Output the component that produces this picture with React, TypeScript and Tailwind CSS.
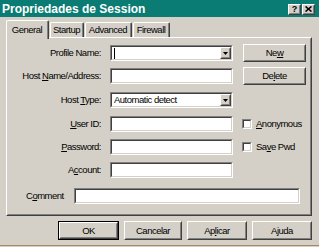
import { FC, ReactNode } from 'react'

const Raised: FC<{ className?: string; children?: ReactNode }> = ({ className = '', children }) => (
  <div className={`border border-t-white border-l-white border-r-[#404040] border-b-[#404040] bg-[#d4d0c8] ${className}`}>
    <div className="w-full h-full border border-t-[#d4d0c8] border-l-[#d4d0c8] border-r-[#808080] border-b-[#808080] flex items-center justify-center">
      {children}
    </div>
  </div>
)

const Sunken: FC<{ className?: string; children?: ReactNode }> = ({ className = '', children }) => (
  <div className={`border border-t-[#808080] border-l-[#808080] border-r-white border-b-white ${className}`}>
    <div className="w-full h-full bg-white border border-t-[#404040] border-l-[#404040] border-r-[#d4d0c8] border-b-[#d4d0c8] flex items-center">
      {children}
    </div>
  </div>
)

const Combo: FC<{ value?: string; caret?: boolean }> = ({ value, caret }) => (
  <Sunken className="w-[123px] h-[16px]">
    <div className="flex-1 flex items-center pl-[1px] h-full overflow-hidden whitespace-nowrap">
      {caret && <div className="w-[1px] h-[11px] bg-black ml-[1px]" />}
      {value && <span className="pl-[1px]">{value}</span>}
    </div>
    <Raised className="w-[11px] h-full">
      <svg width="5" height="3" viewBox="0 0 5 3">
        <path d="M0 0h5L2.5 3z" fill="#000" />
      </svg>
    </Raised>
  </Sunken>
)

const Label: FC<{ children: ReactNode }> = ({ children }) => (
  <div className="w-[93px] text-right whitespace-nowrap">{children}</div>
)

const Check: FC<{ children: ReactNode }> = ({ children }) => (
  <div className="flex items-center">
    <Sunken className="w-[10px] h-[10px]" />
    <span className="ml-[4px] whitespace-nowrap">{children}</span>
  </div>
)

const Tab: FC<{ label: string; width: string; active?: boolean }> = ({ label, width, active }) =>
  active ? (
    <div className={`relative z-10 h-[19px] -mb-[2px] ${width} bg-[#d4d0c8] rounded-t-[2px] border-t border-l border-r border-t-white border-l-white border-r-[#404040] flex`}>
      <div className="flex-1 border-r border-r-[#808080] flex items-start justify-center pt-[3px]">{label}</div>
    </div>
  ) : (
    <div className={`h-[15px] ${width} bg-[#d4d0c8] rounded-t-[2px] border-t border-l border-r border-t-white border-l-white border-r-[#404040] flex`}>
      <div className="flex-1 border-r border-r-[#808080] flex items-start justify-center pt-[1px]">{label}</div>
    </div>
  )

export default function App() {
  return (
    <div className="w-[319px] h-[247px] overflow-hidden bg-[#d4d0c8] flex flex-col text-[9.5px] leading-[12px] tracking-[-0.5px] text-black font-['Liberation_Sans',Arial,sans-serif]">
      {/* title bar */}
      <div className="h-[17px] bg-[#0a7c74] flex items-center justify-between pl-[2px] pr-[4px]">
        <span className="text-white font-bold text-[12px] tracking-normal">Propriedades de Session</span>
        <div className="flex gap-[1px] mt-[1px]">
          <Raised className="w-[13px] h-[11px]">
            <span className="font-bold text-[9px] leading-[9px] tracking-normal">?</span>
          </Raised>
          <Raised className="w-[13px] h-[11px]">
            <svg width="7" height="6" viewBox="0 0 7 6">
              <path d="M0.5 0.5L6.5 5.5M6.5 0.5L0.5 5.5" stroke="#000" strokeWidth="1.6" />
            </svg>
          </Raised>
        </div>
      </div>

      {/* tabs */}
      <div className="h-[20px] flex items-end pl-[6px] gap-[1px]">
        <Tab label="General" width="w-[43px]" active />
        <Tab label="Startup" width="w-[34px]" />
        <Tab label="Advanced" width="w-[47px]" />
        <Tab label="Firewall" width="w-[37px]" />
      </div>

      {/* panel */}
      <div className="ml-[6px] w-[306px] h-[179px] border border-t-white border-l-white border-r-[#404040] border-b-[#404040]">
        <div className="w-full h-full border border-t-[#d4d0c8] border-l-[#d4d0c8] border-r-[#808080] border-b-[#808080] flex flex-col">
          <div className="flex items-center h-[16px] mt-[6px]">
            <Label>Profile Name:</Label>
            <div className="ml-[9px]"><Combo caret /></div>
            <Raised className="ml-[10px] w-[63px] h-[18px]">
              <span>Ne<span className="underline">w</span></span>
            </Raised>
          </div>
          <div className="flex items-center h-[16px] mt-[7px]">
            <Label>Host <span className="underline">N</span>ame/Address:</Label>
            <Sunken className="ml-[9px] w-[123px] h-[16px]" />
            <Raised className="ml-[10px] w-[63px] h-[18px]">
              <span>De<span className="underline">l</span>ete</span>
            </Raised>
          </div>
          <div className="flex items-center h-[16px] mt-[8px]">
            <Label>Host <span className="underline">T</span>ype:</Label>
            <div className="ml-[9px]"><Combo value="Automatic detect" /></div>
          </div>
          <div className="flex items-center h-[16px] mt-[8px]">
            <Label><span className="underline">U</span>ser ID:</Label>
            <Sunken className="ml-[9px] w-[123px] h-[16px]" />
            <div className="ml-[9px]">
              <Check><span className="underline">A</span>nonymous</Check>
            </div>
          </div>
          <div className="flex items-center h-[16px] mt-[7px]">
            <Label><span className="underline">P</span>assword:</Label>
            <Sunken className="ml-[9px] w-[123px] h-[16px]" />
            <div className="ml-[9px]">
              <Check>Sa<span className="underline">v</span>e Pwd</Check>
            </div>
          </div>
          <div className="flex items-center h-[16px] mt-[7px]">
            <Label>A<span className="underline">c</span>count:</Label>
            <Sunken className="ml-[9px] w-[123px] h-[16px]" />
          </div>
          <div className="flex items-center h-[16px] mt-[10px] pl-[18px]">
            <span>C<span className="underline">o</span>mment</span>
            <Sunken className="ml-[10px] w-[226px] h-[16px]" />
          </div>
        </div>
      </div>

      {/* bottom buttons */}
      <div className="mt-[5px] flex justify-end gap-[5px] pr-[7px]">
        <div className="border border-black w-[61px] h-[19px]">
          <Raised className="w-full h-full">OK</Raised>
        </div>
        <Raised className="w-[58px] h-[19px]">Cancelar</Raised>
        <Raised className="w-[60px] h-[19px]">
          <span>Ap<span className="underline">l</span>icar</span>
        </Raised>
        <Raised className="w-[60px] h-[19px]">Ajuda</Raised>
      </div>

      <div className="mt-auto h-[1px] mb-[1px] bg-[#a8885c]" />
    </div>
  )
}
